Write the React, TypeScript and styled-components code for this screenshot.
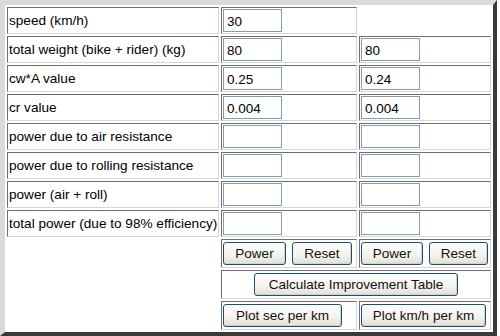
import React from "react";
import styled, { createGlobalStyle } from "styled-components";

const GlobalStyle = createGlobalStyle`
  body {
    margin: 0;
    background: #fff;
    font-family: "Liberation Sans", Arial, sans-serif;
  }
`;

const Table = styled.table`
  border-collapse: separate;
  border-spacing: 2px;
  border-style: solid;
  border-width: 5px 4px 4px 5px;
  border-color: #dadada #3a3a3a #3a3a3a #dadada;
  background: #fff;
  table-layout: fixed;
  width: 497px;
`;

const Cell = styled.td<{ $empty?: boolean; $center?: boolean }>`
  border: 1px solid;
  border-color: ${(p) => (p.$empty ? "transparent" : "#6e6e6e #d6d6d6 #d6d6d6 #6e6e6e")};
  padding: 1px;
  height: 23px;
  font-size: 13.6px;
  color: #000;
  white-space: nowrap;
  vertical-align: middle;
  text-align: ${(p) => (p.$center ? "center" : "left")};
`;

const ButtonCell = styled(Cell)`
  padding: 2px 1px;
`;

const Field = styled.input`
  box-sizing: border-box;
  display: block;
  width: 59px;
  height: 23px;
  border: 1px solid #7f9db9;
  padding: 2px 3px 0;
  font-family: "Liberation Sans", Arial, sans-serif;
  font-size: 13.5px;
  color: #000;
  background: #fff;
  outline: none;
`;

const Btn = styled.button<{ $w: number }>`
  box-sizing: border-box;
  width: ${(p) => p.$w}px;
  height: 23px;
  border: 1px solid #1c4a82;
  border-radius: 3px;
  background: linear-gradient(#ffffff, #f3f2ec 60%, #e2e0d4);
  box-shadow: inset -1px -1px 0 #d6d2c2;
  font-family: "Liberation Sans", Arial, sans-serif;
  font-size: 13.5px;
  color: #111;
  padding: 0;
  cursor: pointer;
`;

const BtnRow = styled.div`
  display: flex;
  gap: 6px;
`;

const rows: [string, string, string | null][] = [
  ["speed (km/h)", "30", null],
  ["total weight (bike + rider) (kg)", "80", "80"],
  ["cw*A value", "0.25", "0.24"],
  ["cr value", "0.004", "0.004"],
  ["power due to air resistance", "", ""],
  ["power due to rolling resistance", "", ""],
  ["power (air + roll)", "", ""],
  ["total power (due to 98% efficiency)", "", ""],
];

export default function App() {
  return (
    <>
      <GlobalStyle />
      <Table>
        <colgroup>
          <col style={{ width: 212 }} />
          <col style={{ width: 136 }} />
          <col />
        </colgroup>
        <tbody>
          {rows.map(([label, a, b]) => (
            <tr key={label}>
              <Cell>{label}</Cell>
              <Cell>
                <Field defaultValue={a} />
              </Cell>
              {b === null ? (
                <Cell $empty />
              ) : (
                <Cell>
                  <Field defaultValue={b} />
                </Cell>
              )}
            </tr>
          ))}
          <tr>
            <Cell $empty />
            <ButtonCell>
              <BtnRow>
                <Btn $w={63}>Power</Btn>
                <Btn $w={60}>Reset</Btn>
              </BtnRow>
            </ButtonCell>
            <ButtonCell>
              <BtnRow>
                <Btn $w={62}>Power</Btn>
                <Btn $w={59}>Reset</Btn>
              </BtnRow>
            </ButtonCell>
          </tr>
          <tr>
            <Cell $empty />
            <ButtonCell colSpan={2} $center>
              <Btn $w={204}>Calculate Improvement Table</Btn>
            </ButtonCell>
          </tr>
          <tr>
            <Cell $empty />
            <ButtonCell>
              <Btn $w={119}>Plot sec per km</Btn>
            </ButtonCell>
            <ButtonCell>
              <Btn $w={125}>Plot km/h per km</Btn>
            </ButtonCell>
          </tr>
        </tbody>
      </Table>
    </>
  );
}
